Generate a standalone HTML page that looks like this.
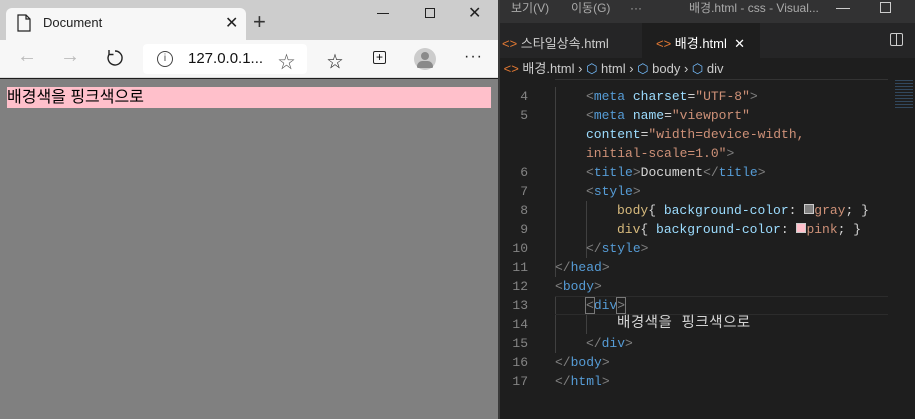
<!DOCTYPE html>
<html><head><meta charset="utf-8"><style>
*{margin:0;padding:0;box-sizing:border-box}
body{width:915px;height:419px;overflow:hidden;position:relative;font-family:"Liberation Sans","Noto Sans CJK KR",sans-serif;background:#1e1e1e}
.a{position:absolute}
.mono{font-family:"Liberation Mono","Noto Sans CJK KR",monospace;font-size:13px;white-space:pre}
.ln{position:absolute;left:500px;width:28px;text-align:right;color:#858585}
.cd{position:absolute;left:555px;color:#d4d4d4}
.t{color:#808080}.tg{color:#569cd6}.at{color:#9cdcfe}.s{color:#ce9178}.sel{color:#d7ba7d}.w{color:#d4d4d4}
</style></head><body>
<!-- browser -->
<div class="a" style="left:0;top:0;width:498px;height:40px;background:#cdcdcd"></div>
<div class="a" style="left:6px;top:8px;width:240px;height:32px;background:#f7f7f7;border-radius:6px 6px 0 0"></div>
<svg class="a" style="left:17px;top:14px" width="14" height="18"><path d="M1 1h8l4 4v12H1z M9 1v4h4" fill="none" stroke="#222" stroke-width="1.2"/></svg>
<div class="a" style="left:43px;top:15px;font-size:13px;color:#222">Document</div>
<div class="a" style="left:225px;top:13px;font-size:16px;color:#222">✕</div>
<div class="a" style="left:253px;top:9px;font-size:22px;color:#333;font-weight:300">+</div>
<div class="a" style="left:377px;top:13px;width:12px;height:1px;background:#222"></div>
<div class="a" style="left:425px;top:8px;width:10px;height:10px;border:1px solid #222"></div>
<div class="a" style="left:468px;top:3px;font-size:16px;color:#222">✕</div>
<div class="a" style="left:0;top:40px;width:498px;height:38px;background:#f7f7f7;border-bottom:1px solid #ddd"></div>
<div class="a" style="left:17px;top:45px;font-size:20px;color:#bbb">←</div>
<div class="a" style="left:60px;top:45px;font-size:20px;color:#bbb">→</div>
<svg class="a" style="left:106px;top:49px" width="18" height="18"><path d="M9 2a7 7 0 1 1-6 3.5M3 1v4.5h4.5" fill="none" stroke="#222" stroke-width="1.4"/></svg>
<div class="a" style="left:143px;top:44px;width:164px;height:30px;background:#fff;border-radius:4px"></div>
<div class="a" style="left:157px;top:51px;width:16px;height:16px;border:1px solid #444;border-radius:50%;font-size:10px;text-align:center;line-height:14px;color:#444">i</div>
<div class="a" style="left:188px;top:50px;font-size:15px;color:#111">127.0.0.1...</div>
<div class="a" style="left:278px;top:48px;font-size:17px;color:#555">☆</div>
<div class="a" style="left:327px;top:48px;font-size:16px;color:#222">☆</div>
<div class="a" style="left:373px;top:51px;width:13px;height:13px;border:1.3px solid #222;border-radius:2px;font-size:12px;line-height:10px;text-align:center">+</div>
<div class="a" style="left:414px;top:48px;width:22px;height:22px;border-radius:50%;background:#ccc"></div>
<div class="a" style="left:421px;top:52px;width:8px;height:8px;border-radius:50%;background:#8a8a8a"></div>
<div class="a" style="left:417px;top:61px;width:16px;height:7px;border-radius:8px 8px 2px 2px;background:#8a8a8a"></div>
<div class="a" style="left:464px;top:48px;font-size:16px;color:#222;letter-spacing:1px">···</div>
<div class="a" style="left:0;top:79px;width:498px;height:340px;background:#808080"></div>
<div class="a" style="left:7px;top:87px;width:484px;height:21px;background:#ffc0cb;font-size:16px;line-height:21px;color:#000">배경색을 핑크색으로</div>
<div class="a" style="left:498px;top:0;width:2px;height:419px;background:#3a3a3a"></div>
<!-- vscode -->
<div class="a" style="left:500px;top:0;width:415px;height:23px;background:#323233;font-size:12px;color:#aaa;line-height:16px">
<span class="a" style="left:11px;top:0">보기(V)</span><span class="a" style="left:71px;top:0">이동(G)</span><span class="a" style="left:130px;top:0">···</span><span class="a" style="left:189px;top:0">배경.html - css - Visual...</span>
<span class="a" style="left:336px;top:8px;width:14px;height:1px;background:#ccc"></span><span class="a" style="left:380px;top:2px;width:11px;height:11px;border:1px solid #ccc"></span></div>
<div class="a" style="left:500px;top:23px;width:415px;height:35px;background:#252526"></div>
<div class="a" style="left:502px;top:33px;font-size:13px;color:#ccc"><span style="color:#e37933">&lt;&gt;</span> 스타일상속.html</div>
<div class="a" style="left:642px;top:23px;width:118px;height:35px;background:#1e1e1e"></div>
<div class="a" style="left:656px;top:33px;font-size:13px;color:#fff"><span style="color:#e37933">&lt;&gt;</span> 배경.html &nbsp;✕</div>
<div class="a" style="left:890px;top:33px;width:13px;height:13px;border:1px solid #ccc;border-radius:2px"></div><div class="a" style="left:896px;top:33px;width:1px;height:13px;background:#ccc"></div>
<div class="a" style="left:500px;top:58px;width:415px;height:22px;background:#1e1e1e;font-size:13px;color:#ccc;line-height:22px;white-space:pre"> <span style="color:#e37933">&lt;&gt;</span> 배경.html › <span style="color:#75beff">⬡</span> html › <span style="color:#75beff">⬡</span> body › <span style="color:#75beff">⬡</span> div</div>
<div class="a" style="left:555px;top:79px;width:333px;height:1px;background:#333"></div>
<div class="a" style="left:555px;top:87px;width:1px;height:190px;background:#404040"></div>
<div class="a" style="left:586px;top:201px;width:1px;height:57px;background:#404040"></div>
<div class="a" style="left:555px;top:296px;width:1px;height:57px;background:#404040"></div>
<div class="a" style="left:586px;top:315px;width:1px;height:19px;background:#404040"></div>
<div class="a" style="left:555px;top:296px;width:333px;height:19px;border-top:1px solid #2c2c2c;border-bottom:1px solid #2c2c2c"></div>
<div class="a" style="left:895px;top:80px;width:18px;height:30px;background:repeating-linear-gradient(#3a5a7a 0 1px,transparent 1px 3px);opacity:.7"></div>
<div class="mono" style="position:absolute;top:87px;left:0;line-height:19px">
<div class="ln" style="top:0">4</div><div class="cd" style="top:0;left:586px"><span class="t">&lt;</span><span class="tg">meta</span> <span class="at">charset</span><span class="w">=</span><span class="s">"UTF-8"</span><span class="t">&gt;</span></div>
<div class="ln" style="top:19px">5</div><div class="cd" style="top:19px;left:586px"><span class="t">&lt;</span><span class="tg">meta</span> <span class="at">name</span><span class="w">=</span><span class="s">"viewport"</span></div>
<div class="cd" style="top:38px;left:586px"><span class="at">content</span><span class="w">=</span><span class="s">"width=device-width,</span></div>
<div class="cd" style="top:57px;left:586px"><span class="s">initial-scale=1.0"</span><span class="t">&gt;</span></div>
<div class="ln" style="top:76px">6</div><div class="cd" style="top:76px;left:586px"><span class="t">&lt;</span><span class="tg">title</span><span class="t">&gt;</span>Document<span class="t">&lt;/</span><span class="tg">title</span><span class="t">&gt;</span></div>
<div class="ln" style="top:95px">7</div><div class="cd" style="top:95px;left:586px"><span class="t">&lt;</span><span class="tg">style</span><span class="t">&gt;</span></div>
<div class="ln" style="top:114px">8</div><div class="cd" style="top:114px;left:617px"><span class="sel">body</span>{ <span class="at">background-color</span>: <span style="display:inline-block;width:10px;height:10px;background:#808080;border:1px solid #ccc"></span><span class="s">gray</span>; }</div>
<div class="ln" style="top:133px">9</div><div class="cd" style="top:133px;left:617px"><span class="sel">div</span>{ <span class="at">background-color</span>: <span style="display:inline-block;width:10px;height:10px;background:#ffc0cb;border:1px solid #ccc"></span><span class="s">pink</span>; }</div>
<div class="ln" style="top:152px">10</div><div class="cd" style="top:152px;left:586px"><span class="t">&lt;/</span><span class="tg">style</span><span class="t">&gt;</span></div>
<div class="ln" style="top:171px">11</div><div class="cd" style="top:171px"><span class="t">&lt;/</span><span class="tg">head</span><span class="t">&gt;</span></div>
<div class="ln" style="top:190px">12</div><div class="cd" style="top:190px"><span class="t">&lt;</span><span class="tg">body</span><span class="t">&gt;</span></div>
<div class="ln" style="top:209px">13</div><div class="cd" style="top:209px;left:586px"><span class="t" style="outline:1px solid #777">&lt;</span><span class="tg">div</span><span class="t" style="outline:1px solid #777">&gt;</span></div>
<div class="ln" style="top:228px">14</div><div class="cd" style="top:228px;left:617px;font-size:14.5px;letter-spacing:0.5px">배경색을 핑크색으로</div>
<div class="ln" style="top:247px">15</div><div class="cd" style="top:247px;left:586px"><span class="t">&lt;/</span><span class="tg">div</span><span class="t">&gt;</span></div>
<div class="ln" style="top:266px">16</div><div class="cd" style="top:266px"><span class="t">&lt;/</span><span class="tg">body</span><span class="t">&gt;</span></div>
<div class="ln" style="top:285px">17</div><div class="cd" style="top:285px"><span class="t">&lt;/</span><span class="tg">html</span><span class="t">&gt;</span></div>
</div>
</body></html>
